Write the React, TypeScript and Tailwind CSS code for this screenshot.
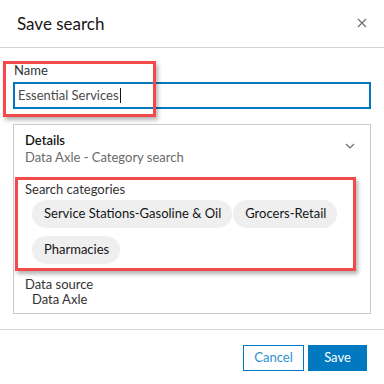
import React from "react";

const font = { fontFamily: "Lato, 'Open Sans', sans-serif" };

function Chip({ label }: { label: string }) {
  return (
    <span className="inline-flex h-[28px] items-center rounded-full bg-[#efefef] pl-[12px] pr-[11px] text-[13px] text-[#151515]">
      {label}
    </span>
  );
}

export default function App() {
  return (
    <div className="relative h-[384px] w-[384px] overflow-hidden bg-white" style={font}>
      <div className="flex h-[48px] items-center justify-between border-b border-[#d4d4d4] pl-[17px] pr-[17px]">
        <span className="text-[17px] text-[#151515]">Save search</span>
        <svg width="10" height="10" viewBox="0 0 10 10" className="mt-[-2px]">
          <path d="M1 1 L9 9 M9 1 L1 9" stroke="#6a6a6a" strokeWidth="1.1" />
        </svg>
      </div>
      <div className="px-[13px] pt-[13px]">
        <div className="pl-[1px] text-[13px] leading-[18px] text-[#323232]">Name</div>
        <div className="mt-[3px] flex h-[27px] w-[358px] items-center border-2 border-[#0079c1] px-[3px] text-[13px] text-[#4a4a4a]">
          Essential Services
          <span className="ml-[1px] inline-block h-[15px] w-[1px] bg-[#151515]" />
        </div>
        <div className="mt-[15px] h-[190px] w-[358px] border border-[#cacaca] px-[11px] pt-[7px]">
          <div className="flex items-center justify-between">
            <div>
              <div className="text-[13px] font-semibold leading-[17px] text-[#151515]">Details</div>
              <div className="text-[13px] leading-[17px] text-[#6a6a6a]">Data Axle - Category search</div>
            </div>
            <svg width="10" height="6" viewBox="0 0 10 6" className="mr-[4px] mt-[-6px]">
              <path d="M1 1 L5 5 L9 1" fill="none" stroke="#6a6a6a" strokeWidth="1.1" />
            </svg>
          </div>
          <div className="mt-[15px] text-[13px] leading-[17px] text-[#323232]">Search categories</div>
          <div className="mt-[2px] flex flex-wrap gap-x-[1px] gap-y-[8px] pl-[7px]">
            <Chip label="Service Stations-Gasoline & Oil" />
            <Chip label="Grocers-Retail" />
            <Chip label="Pharmacies" />
          </div>
          <div className="mt-[13px] text-[13px] leading-[15px] text-[#323232]">Data source</div>
          <div className="pl-[7px] text-[13px] leading-[15px] text-[#323232]">Data Axle</div>
        </div>
      </div>
      <div className="mt-[15px] flex justify-end gap-[4px] border-t border-[#d4d4d4] pr-[17px] pt-[15px]">
        <button className="h-[26px] w-[61px] border border-[#0079c1] bg-white text-[13px] text-[#2d8fd0]">Cancel</button>
        <button className="h-[26px] w-[59px] bg-[#0079c1] text-[13px] text-white">Save</button>
      </div>

      <div className="absolute left-[3px] top-[61px] h-[56px] w-[153px] border-[3px] border-[#f24a4a] shadow-[2px_3px_4px_rgba(0,0,0,0.3)]" />
      <div className="absolute left-[15px] top-[177px] h-[94px] w-[341px] border-[3px] border-[#f24a4a] shadow-[2px_3px_4px_rgba(0,0,0,0.3)]" />
    </div>
  );
}
